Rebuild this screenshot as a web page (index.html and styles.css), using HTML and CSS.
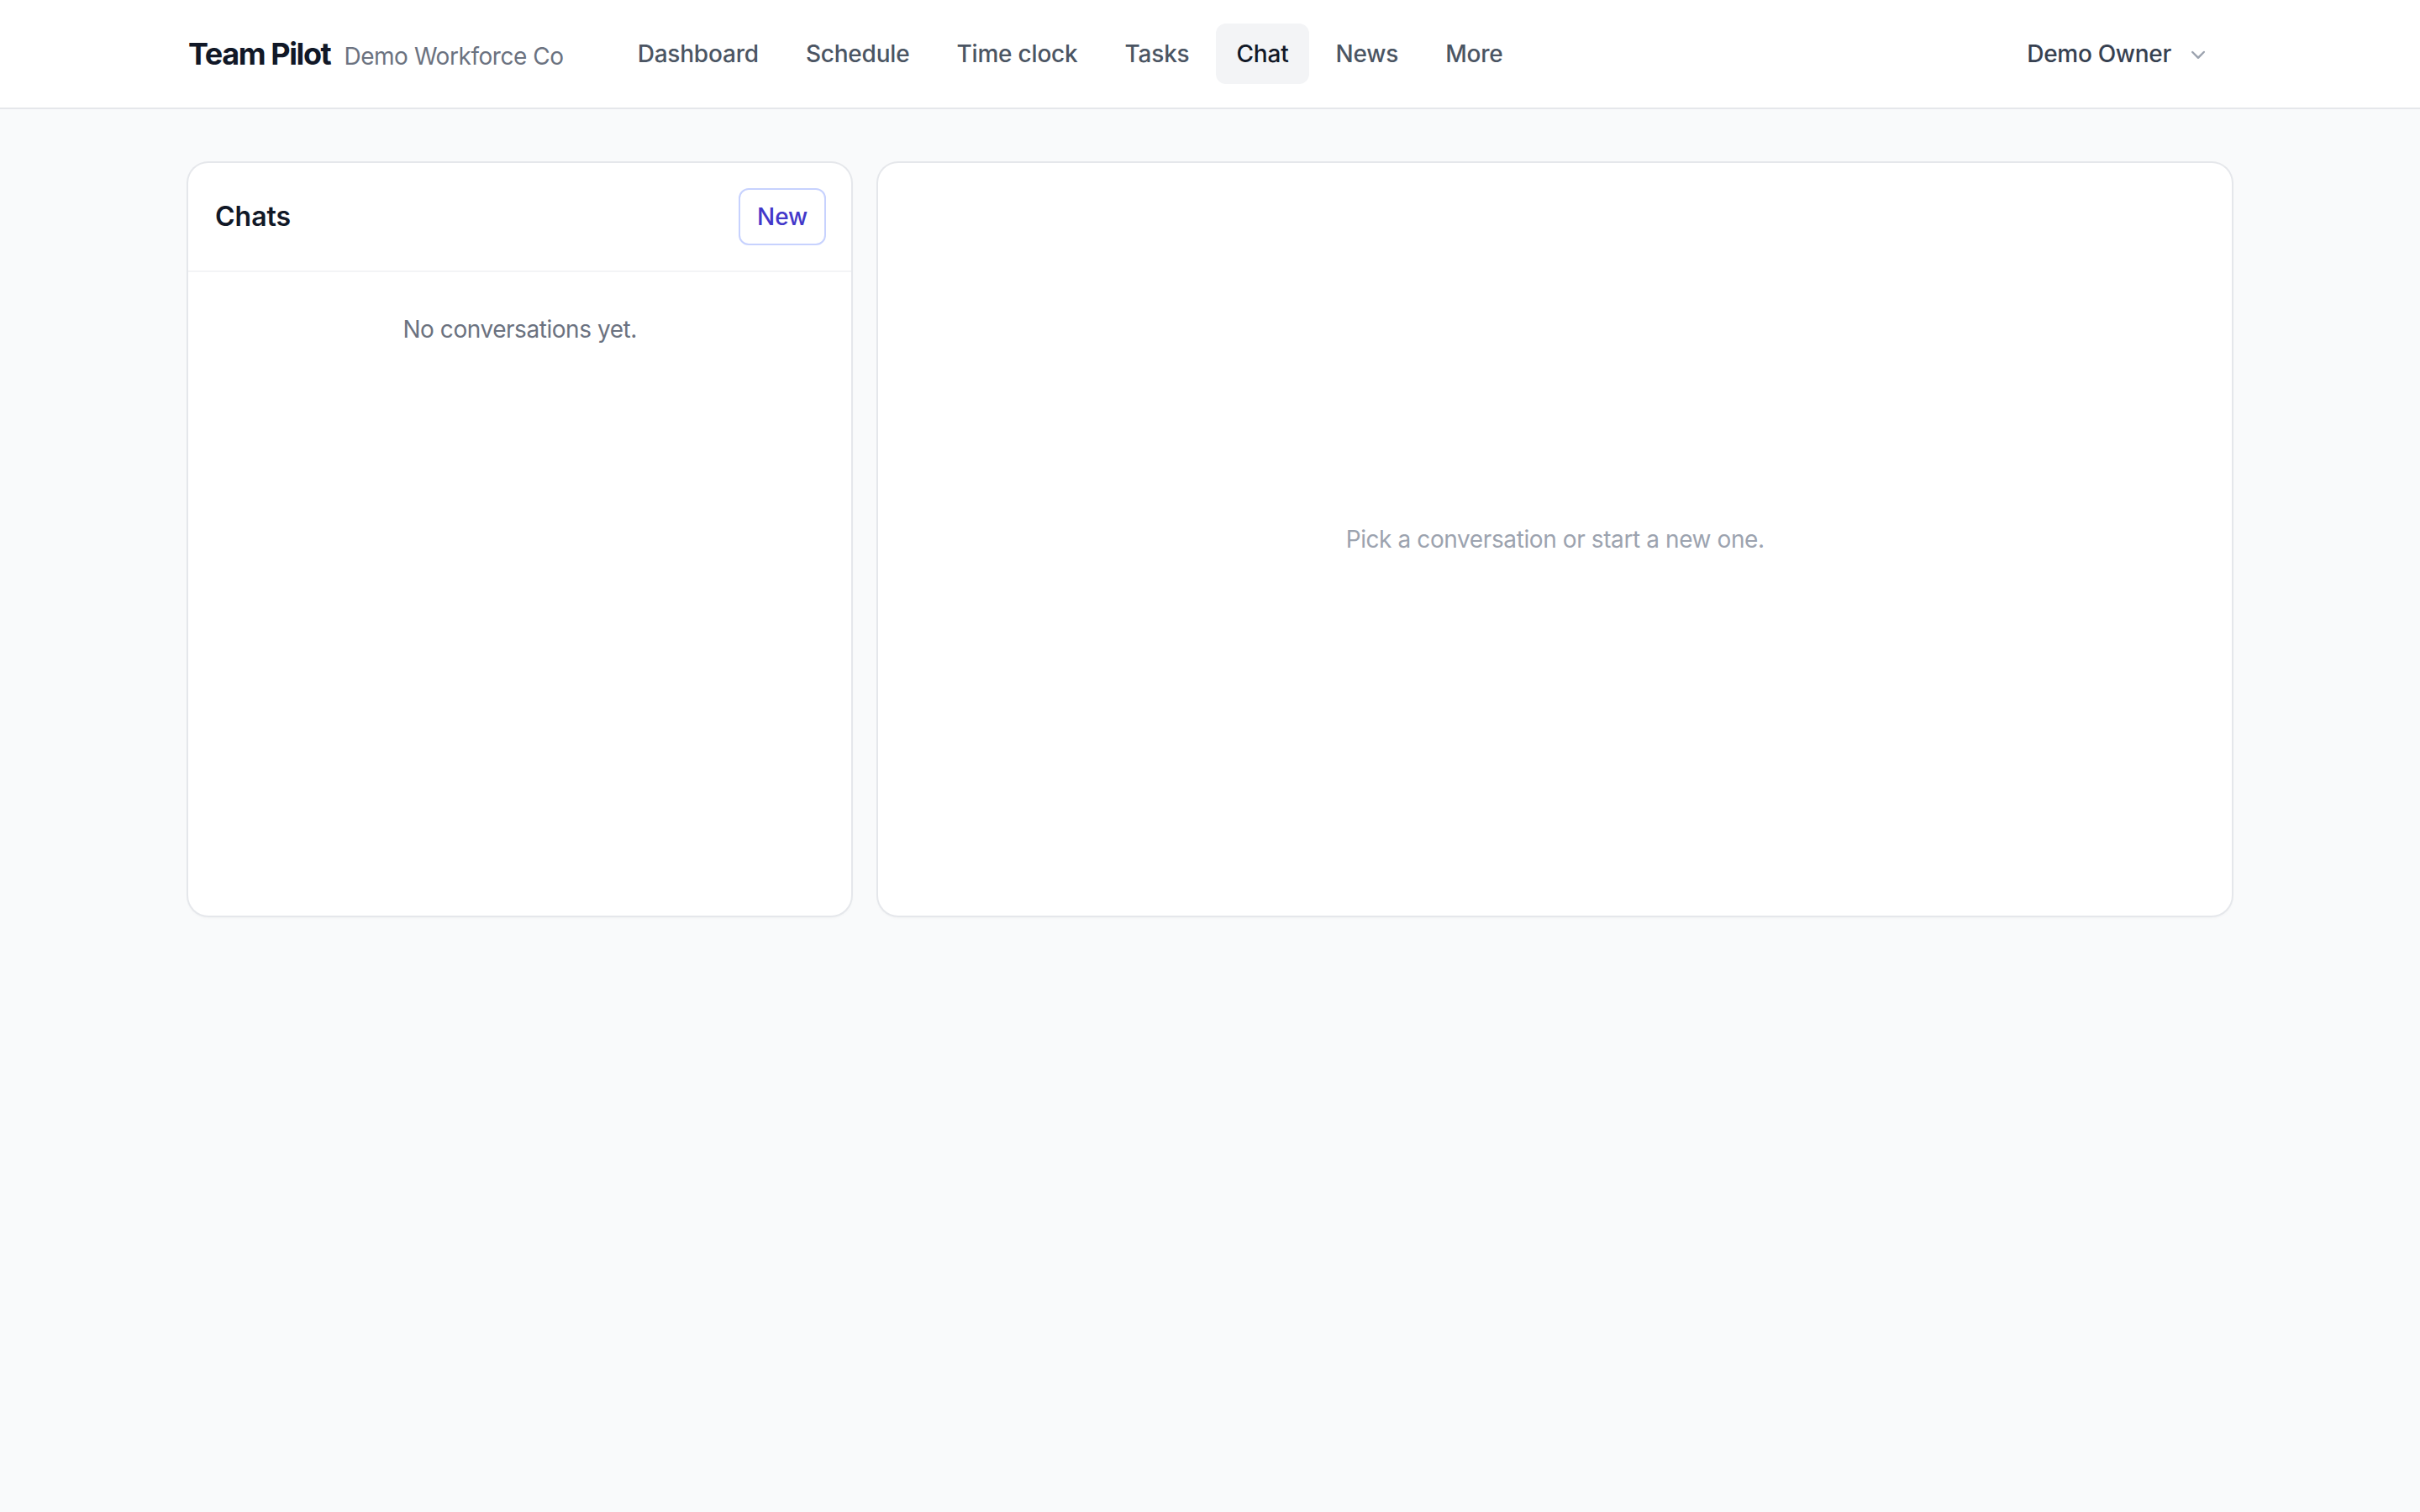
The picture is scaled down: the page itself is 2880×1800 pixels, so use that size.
FILE: index.html
```html
<!DOCTYPE html>
<html lang="en">
<head>
    <meta charset="UTF-8">
    <meta name="viewport" content="width=device-width, initial-scale=1.0">
    <title>Chat - Team Pilot</title>
    <link rel="stylesheet" href="styles.css">
</head>
<body>
    <header class="topbar">
        <div class="topbar-inner">
            <div class="topbar-left">
                <div class="brand">
                    <span class="brand-name">Team Pilot</span>
                    <span class="brand-org">Demo Workforce Co</span>
                </div>
                <nav class="nav">
                    <a class="nav-link" href="#">Dashboard</a>
                    <a class="nav-link" href="#">Schedule</a>
                    <a class="nav-link" href="#">Time clock</a>
                    <a class="nav-link" href="#">Tasks</a>
                    <a class="nav-link active" href="#">Chat</a>
                    <a class="nav-link" href="#">News</a>
                    <a class="nav-link" href="#">More</a>
                </nav>
            </div>
            <button class="user-button">
                <span>Demo Owner</span>
                <svg class="chevron" viewBox="0 0 20 20" fill="currentColor" aria-hidden="true">
                    <path fill-rule="evenodd" d="M5.22 8.22a.75.75 0 0 1 1.06 0L10 11.94l3.72-3.72a.75.75 0 1 1 1.06 1.06l-4.250 4.25a.75.75 0 0 1-1.06 0L5.22 9.28a.75.75 0 0 1 0-1.06Z" clip-rule="evenodd"/>
                </svg>
            </button>
        </div>
    </header>

    <main class="main">
        <div class="chat-grid">
            <section class="card chat-list">
                <div class="card-header">
                    <h2 class="card-title">Chats</h2>
                    <button class="new-button">New</button>
                </div>
                <div class="chat-list-body">
                    <p class="empty-text">No conversations yet.</p>
                </div>
            </section>
            <section class="card chat-view">
                <p class="placeholder-text">Pick a conversation or start a new one.</p>
            </section>
        </div>
    </main>
</body>
</html>
```

FILE: styles.css
```css
* {
    box-sizing: border-box;
}
body {
    margin: 0;
    background-color: #F9FAFB;
    color: #111827;
    font-family: Inter, "Noto Sans", Arial, sans-serif;
}
button {
    font-family: inherit;
    background: none;
    border: none;
    cursor: pointer;
}
.topbar {
    background-color: white;
    border-bottom: 2px solid #E5E7EB;
}
.topbar-inner {
    max-width: 2560px;
    margin: 0 auto;
    padding: 0 64px;
    height: 128px;
    display: flex;
    align-items: center;
    justify-content: space-between;
}
.topbar-left {
    display: flex;
    align-items: center;
}
.brand {
    display: flex;
    align-items: baseline;
    gap: 16px;
}
.brand-name {
    font-size: 36px;
    line-height: 56px;
    font-weight: 700;
    letter-spacing: -1.4px;
    color: #111827;
}
.brand-org {
    font-size: 28px;
    line-height: 40px;
    letter-spacing: -0.45px;
    color: #6B7280;
}
.nav {
    display: flex;
    gap: 8px;
    margin-left: 64px;
}
.nav-link {
    padding: 16px 24px;
    border-radius: 12px;
    font-size: 28px;
    line-height: 40px;
    font-weight: 500;
    letter-spacing: -0.2px;
    color: #4B5563;
    text-decoration: none;
}
.nav-link.active {
    background-color: #F3F4F6;
    color: #111827;
}
.user-button {
    display: flex;
    align-items: center;
    gap: 16px;
    padding: 16px 24px;
    font-size: 28px;
    line-height: 40px;
    font-weight: 500;
    letter-spacing: -0.3px;
    color: #374151;
}
.chevron {
    width: 32px;
    height: 32px;
    color: #9CA3AF;
}
.main {
    max-width: 2560px;
    margin: 0 auto;
    padding: 64px;
}
.chat-grid {
    display: grid;
    grid-template-columns: repeat(3, 1fr);
    gap: 32px;
    height: 896px;
}
.card {
    background-color: white;
    border-radius: 24px;
    box-shadow: 0 0 0 2px #E5E7EB, 0px 2px 4px rgba(0, 0, 0, 0.05);
    overflow: hidden;
}
.chat-list {
    display: flex;
    flex-direction: column;
}
.card-header {
    display: flex;
    align-items: center;
    justify-content: space-between;
    padding: 30px 30px 30px 32px;
    border-bottom: 2px solid #F3F4F6;
}
.card-title {
    margin: 0;
    font-size: 32px;
    line-height: 48px;
    font-weight: 600;
    color: #111827;
}
.new-button {
    padding: 12px 20px;
    border: 2px solid #C7D2FE;
    border-radius: 12px;
    font-size: 28px;
    line-height: 40px;
    font-weight: 500;
    color: #4338CA;
    background-color: white;
}
.chat-list-body {
    padding: 48px 32px;
}
.empty-text {
    margin: 0;
    text-align: center;
    font-size: 28px;
    line-height: 40px;
    letter-spacing: -0.45px;
    color: #6B7280;
}
.chat-view {
    grid-column: span 2;
    display: flex;
    align-items: center;
    justify-content: center;
}
.placeholder-text {
    margin: 0;
    font-size: 28px;
    line-height: 40px;
    letter-spacing: -0.4px;
    color: #9CA3AF;
}
```
